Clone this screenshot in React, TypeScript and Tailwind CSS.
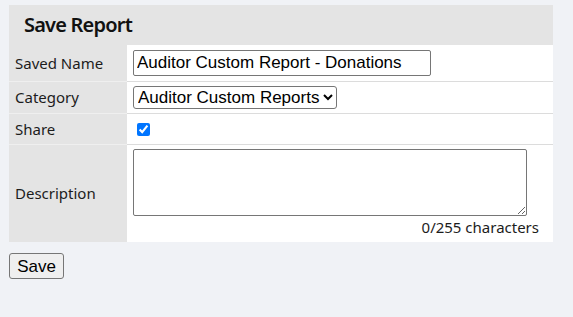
import { useState } from "react"

const labelFont = { fontFamily: '"Noto Sans", sans-serif' }

function Label({ children }: { children: string }) {
  return (
    <div
      className="flex items-center bg-[#e4e4e4] pl-[6px] text-[15px] text-[#1c1c1c] border-b border-[#efefef]"
      style={labelFont}
    >
      {children}
    </div>
  )
}

export default function App() {
  const [name, setName] = useState("Auditor Custom Report - Donations")
  const [description, setDescription] = useState("")

  return (
    <div className="min-h-[317px] bg-[#f0f2f6] pt-[5px] pl-[9px] font-['Liberation_Sans',Arial,sans-serif]">
      <div className="w-[544px]">
        <div className="flex h-[40px] items-center bg-[#e4e4e4] pl-[15px]">
          <h2
            className="text-[20px] font-semibold tracking-[-0.8px] text-[#111]"
            style={labelFont}
          >
            Save Report
          </h2>
        </div>

        <div className="grid grid-cols-[118px_1fr] bg-white">
          <Label>Saved Name</Label>
          <div className="flex h-[37px] items-center border-b border-[#dcdcdc] pl-[6px]">
            <input
              type="text"
              value={name}
              onChange={(e) => setName(e.target.value)}
              className="h-[26px] w-[298px] rounded-[2px] border border-[#767676] px-[3px] text-[17px] text-black"
            />
          </div>

          <Label>Category</Label>
          <div className="flex h-[32px] items-center border-b border-[#dcdcdc] pl-[6px]">
            <select
              defaultValue="auditor"
              className="h-[23px] w-[204px] rounded-[3px] border border-[#767676] bg-white pl-0 text-[17px] text-black"
            >
              <option value="auditor">Auditor Custom Reports</option>
              <option value="general">General Reports</option>
            </select>
          </div>

          <Label>Share</Label>
          <div className="flex h-[31px] items-center border-b border-[#dcdcdc] pl-[10px]">
            <input type="checkbox" defaultChecked className="h-[13px] w-[13px]" />
          </div>

          <div
            className="flex items-center bg-[#e4e4e4] pl-[6px] text-[15px] text-[#1c1c1c]"
            style={labelFont}
          >
            Description
          </div>
          <div className="flex h-[97px] flex-col pl-[6px] pt-[4px]">
            <textarea
              maxLength={255}
              value={description}
              onChange={(e) => setDescription(e.target.value)}
              className="h-[67px] w-[394px] rounded-[2px] border border-[#767676] px-[2px] text-[14px]"
            />
            <div
              className="pr-[14px] text-right text-[15px] leading-[22px] text-[#1c1c1c]"
              style={labelFont}
            >
              {description.length}/255 characters
            </div>
          </div>
        </div>

        <button className="mt-[11px] h-[26px] w-[55px] rounded-[3px] border border-[#767676] bg-[#efefef] text-[17px] text-black">
          Save
        </button>
      </div>
    </div>
  )
}
